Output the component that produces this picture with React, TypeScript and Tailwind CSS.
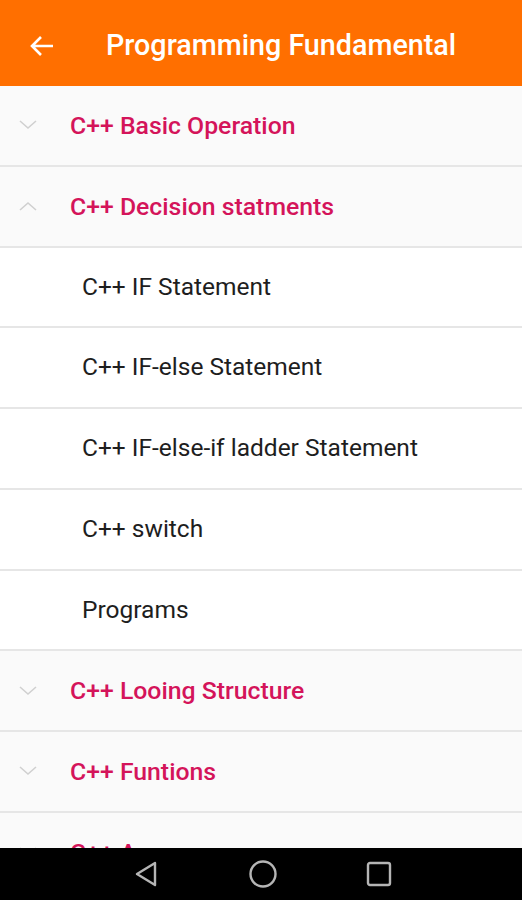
import React from "react";

const Chevron = ({ up }: { up?: boolean }) => (
  <svg width="20" height="12" viewBox="0 0 20 12" className="shrink-0">
    <path
      d={up ? "M2 10 L10 3 L18 10" : "M2 2 L10 9 L18 2"}
      fill="none"
      stroke="#d0d0d0"
      strokeWidth="1.6"
    />
  </svg>
);

const Section = ({ title, up }: { title: string; up?: boolean }) => (
  <div className="flex h-[80.75px] shrink-0 items-center border-b-2 border-[#e6e6e6] bg-[#fafafa] pl-[18px]">
    <Chevron up={up} />
    <span className="ml-[32px] text-[24.8px] font-medium text-[#d4145a]">{title}</span>
  </div>
);

const Child = ({ title }: { title: string }) => (
  <div className="flex h-[80.75px] shrink-0 items-center border-b-2 border-[#e6e6e6] bg-white pl-[82px]">
    <span className="text-[24.5px] text-[#1e1e1e]">{title}</span>
  </div>
);

export default function App() {
  return (
    <div className="relative flex h-[900px] w-[522px] flex-col overflow-hidden bg-[#fafafa]" style={{ fontFamily: "Roboto, 'Noto Sans', sans-serif" }}>
      <div className="flex h-[86px] shrink-0 items-center bg-[#ff6f00] pt-[6px]">
        <svg width="26" height="24" viewBox="0 0 26 24" className="ml-[29px]">
          <path d="M24 12 H3 M12 3 L3 12 L12 21" fill="none" stroke="white" strokeWidth="2.6" />
        </svg>
        <span className="ml-[51px] text-[28.7px] font-medium text-white">Programming Fundamental</span>
      </div>
      <div className="flex flex-1 flex-col overflow-hidden">
        <Section title="C++ Basic Operation" />
        <Section title="C++ Decision statments" up />
        <Child title="C++ IF Statement" />
        <Child title="C++ IF-else Statement" />
        <Child title="C++ IF-else-if ladder Statement" />
        <Child title="C++ switch" />
        <Child title="Programs" />
        <Section title="C++ Looing Structure" />
        <Section title="C++ Funtions" />
        <Section title="C++ Arrays" />
      </div>
      <div className="flex h-[52px] shrink-0 items-center bg-black">
        <svg width="26" height="28" viewBox="0 0 26 28" className="ml-[133px]">
          <path d="M22 3 L4 14 L22 25 Z" fill="none" stroke="#b5b5b5" strokeWidth="2.4" strokeLinejoin="round" />
        </svg>
        <svg width="30" height="30" viewBox="0 0 30 30" className="ml-[89px]">
          <circle cx="15" cy="15" r="12.5" fill="none" stroke="#b5b5b5" strokeWidth="2.4" />
        </svg>
        <svg width="26" height="26" viewBox="0 0 26 26" className="ml-[88px]">
          <rect x="2" y="2" width="22" height="22" rx="2" fill="none" stroke="#b5b5b5" strokeWidth="2.4" />
        </svg>
      </div>
    </div>
  );
}
